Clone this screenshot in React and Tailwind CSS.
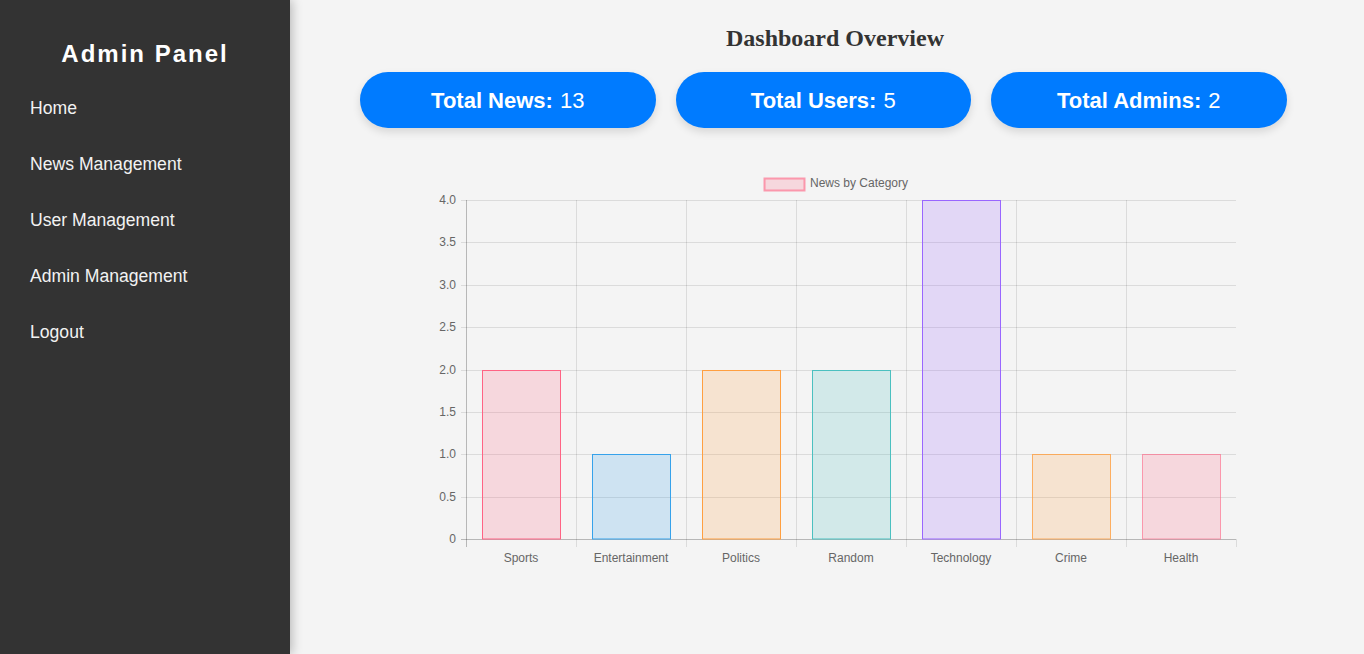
const stats = [
  { label: 'Total News:', value: 13 },
  { label: 'Total Users:', value: 5 },
  { label: 'Total Admins:', value: 2 },
];

const navItems = ['Home', 'News Management', 'User Management', 'Admin Management', 'Logout'];

const categories = [
  { name: 'Sports', value: 2, fill: 'rgba(255,99,132,0.2)', stroke: 'rgb(255,99,132)' },
  { name: 'Entertainment', value: 1, fill: 'rgba(54,162,235,0.2)', stroke: 'rgb(54,162,235)' },
  { name: 'Politics', value: 2, fill: 'rgba(255,159,64,0.2)', stroke: 'rgb(255,159,64)' },
  { name: 'Random', value: 2, fill: 'rgba(75,192,192,0.2)', stroke: 'rgb(75,192,192)' },
  { name: 'Technology', value: 4, fill: 'rgba(153,102,255,0.2)', stroke: 'rgb(153,102,255)' },
  { name: 'Crime', value: 1, fill: 'rgba(255,159,64,0.2)', stroke: 'rgba(255,159,64,0.8)' },
  { name: 'Health', value: 1, fill: 'rgba(255,99,132,0.2)', stroke: 'rgba(255,99,132,0.6)' },
];

// chart coordinates are relative to the svg (page x - 290, page y - 160)
const left = 176;
const top = 40;
const bottom = 379;
const colW = 110;
const ticks = [4.0, 3.5, 3.0, 2.5, 2.0, 1.5, 1.0, 0.5, 0];
const yFor = (v) => bottom - (v / 4) * (bottom - top);

function BarChart() {
  const right = left + colW * categories.length;
  return (
    <svg width="1074" height="440" className="block" style={{ fontFamily: '"Liberation Sans", Arial, sans-serif' }}>
      {/* legend */}
      <rect x="474.5" y="18.5" width="40" height="12" fill="rgba(255,99,132,0.2)" stroke="rgba(255,99,132,0.6)" strokeWidth="2" />
      <text x="520" y="27" fontSize="12" fill="#666">News by Category</text>

      {/* horizontal grid + y labels */}
      {ticks.map((t) => {
        const y = Math.round(yFor(t)) + 0.5;
        return (
          <g key={t}>
            <line x1={left - 5} x2={right} y1={y} y2={y} stroke={t === 0 ? 'rgba(0,0,0,0.25)' : 'rgba(0,0,0,0.1)'} />
            <text x={left - 10} y={y} fontSize="12" fill="#666" textAnchor="end" dominantBaseline="middle">
              {t === 0 ? '0' : t.toFixed(1)}
            </text>
          </g>
        );
      })}

      {/* vertical grid */}
      {categories.map((c, i) => (
        <line key={c.name} x1={left + i * colW + 0.5} x2={left + i * colW + 0.5} y1={top} y2={bottom + 8} stroke={i === 0 ? 'rgba(0,0,0,0.25)' : 'rgba(0,0,0,0.1)'} />
      ))}
      <line x1={right + 0.5} x2={right + 0.5} y1={bottom} y2={bottom + 8} stroke="rgba(0,0,0,0.1)" />

      {/* bars */}
      {categories.map((c, i) => {
        const cx = left + i * colW + colW / 2;
        const w = 78;
        const y = yFor(c.value);
        return (
          <g key={c.name}>
            <rect x={Math.round(cx - w / 2) + 0.5} y={Math.round(y) + 0.5} width={w} height={bottom - Math.round(y) - 0.5} fill={c.fill} stroke={c.stroke} strokeWidth="1" />
            <text x={cx} y={bottom + 20} fontSize="12" fill="#666" textAnchor="middle" dominantBaseline="middle">
              {c.name}
            </text>
          </g>
        );
      })}
    </svg>
  );
}

export default function App() {
  return (
    <div className="flex min-h-[654px] bg-[#f4f4f4]" style={{ fontFamily: '"Liberation Sans", Arial, sans-serif' }}>
      {/* Sidebar */}
      <aside className="w-[290px] flex-shrink-0 bg-[#333333] text-white shadow-[2px_0_10px_rgba(0,0,0,0.25)] z-10">
        <h1 className="mt-[40px] text-center text-[24px] leading-[28px] font-bold tracking-[2px]">Admin Panel</h1>
        <nav className="mt-[12px]">
          {navItems.map((item) => (
            <a key={item} href="#" className="block px-[30px] py-[16px] text-[17.6px] leading-[24px] text-[#f2f2f2]">
              {item}
            </a>
          ))}
        </nav>
      </aside>

      {/* Main */}
      <main className="flex-1 min-w-0">
        <h2
          className="mt-[24px] pl-[16px] text-center text-[24px] leading-[28px] font-bold text-[#333]"
          style={{ fontFamily: '"Liberation Serif", "Times New Roman", serif' }}
        >
          Dashboard Overview
        </h2>
        <div className="mt-[20px] ml-[70px] flex gap-[20px]">
          {stats.map((s) => (
            <div
              key={s.label}
              className="w-[295.5px] h-[56px] rounded-full bg-[#007bff] text-white text-[22px] flex items-center justify-center shadow-[0_4px_8px_rgba(0,0,0,0.12)]"
            >
              <span className="font-bold">{s.label}</span>
              <span className="ml-[7px]">{s.value}</span>
            </div>
          ))}
        </div>
        <div className="mt-[32px]">
          <BarChart />
        </div>
      </main>
    </div>
  );
}
